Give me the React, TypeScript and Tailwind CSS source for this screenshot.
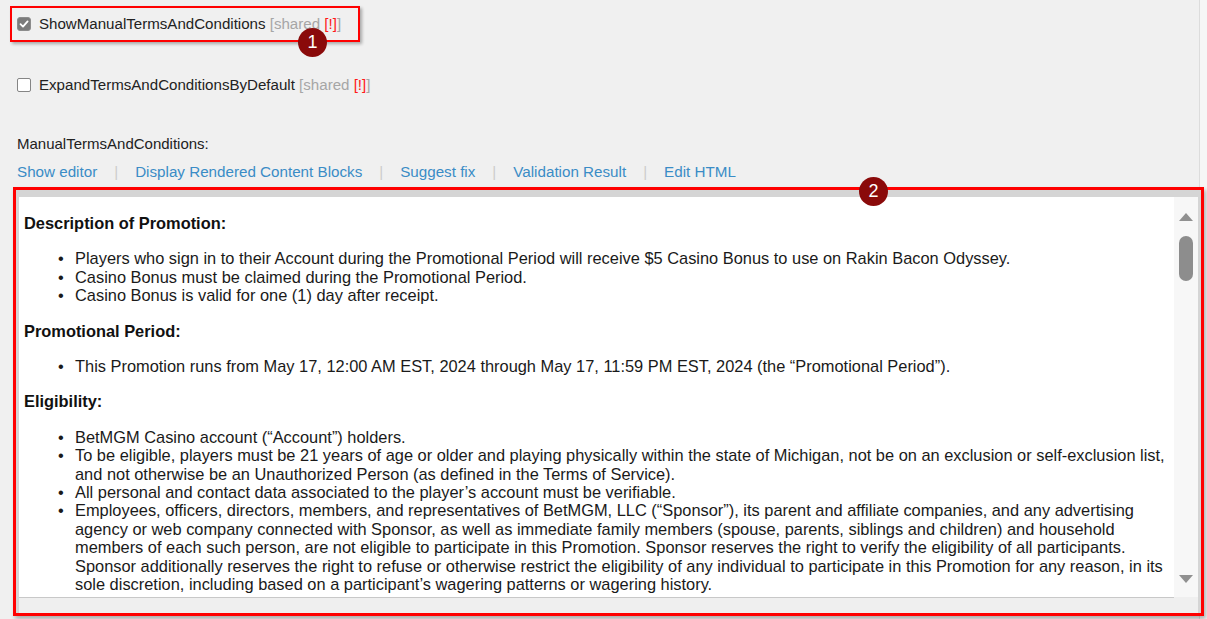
import React from "react";

function CheckedBox() {
  return (
    <span className="w-[14px] h-[14px] shrink-0 rounded-[3px] bg-[#7b7b7b] border border-[#8c8c8c] flex items-center justify-center">
      <svg width="10" height="10" viewBox="0 0 10 10">
        <path d="M1.5 5.2 L4 7.6 L8.6 2.4" fill="none" stroke="#ffffff" strokeWidth="1.8" strokeLinecap="round" strokeLinejoin="round" />
      </svg>
    </span>
  );
}

function EmptyBox() {
  return <span className="w-[14px] h-[14px] shrink-0 rounded-[2px] bg-white border border-[#858585]" />;
}

function Shared() {
  return (
    <span className="text-[#a6a6a6]">
      {" "}[shared <span className="text-[#ff1a1a]">[!]</span>]
    </span>
  );
}

function Badge({ n, className }: { n: string; className: string }) {
  return (
    <span
      className={
        "absolute w-[29px] h-[29px] rounded-full bg-[#8a0a0a] text-white text-[18px] leading-[29px] text-center " +
        className
      }
    >
      {n}
    </span>
  );
}

function Li({ children }: { children: React.ReactNode }) {
  return (
    <li className="flex">
      <span className="w-[17px] shrink-0">•</span>
      <span>{children}</span>
    </li>
  );
}

export default function App() {
  return (
    <div className="w-[1207px] h-[619px] overflow-hidden bg-[#f0f0f0] font-['Liberation_Sans',Arial,sans-serif] flex">
      <div className="w-[1199px] shrink-0 flex flex-col relative z-10">
        <div className="ml-[10px] mt-[6px] w-[350px] h-[36px] border-2 border-[#ff0000] shadow-[2px_2px_3px_rgba(0,0,0,0.3)] flex items-center pl-[5px] relative">
          <CheckedBox />
          <span className="ml-[8px] text-[15.1px] text-[#222222] whitespace-nowrap">
            ShowManualTermsAndConditions
            <Shared />
          </span>
          <Badge n="1" className="left-[286px] top-[20px]" />
        </div>

        <div className="mt-[33px] ml-[17px] h-[20px] flex items-center">
          <EmptyBox />
          <span className="ml-[8px] text-[15.1px] text-[#222222] whitespace-nowrap">
            ExpandTermsAndConditionsByDefault
            <Shared />
          </span>
        </div>

        <div className="mt-[40px] ml-[17px] h-[18px] leading-[18px] text-[15px] text-[#222222]">
          ManualTermsAndConditions:
        </div>

        <div className="mt-[10px] ml-[17px] h-[18px] leading-[18px] text-[15.2px] text-[#3a8cc6] flex whitespace-nowrap">
          <span>Show editor</span>
          <span className="mx-[17px] text-[#cccccc]">|</span>
          <span>Display Rendered Content Blocks</span>
          <span className="mx-[17px] text-[#cccccc]">|</span>
          <span>Suggest fix</span>
          <span className="mx-[17px] text-[#cccccc]">|</span>
          <span>Validation Result</span>
          <span className="mx-[17px] text-[#cccccc]">|</span>
          <span>Edit HTML</span>
        </div>

        <div className="mt-[6px] ml-[13px] w-[1191px] h-[429px] border-[3px] border-[#ff0000] shadow-[2px_3px_4px_rgba(0,0,0,0.28)] relative flex flex-col">
          <Badge n="2" className="left-[843px] top-[-13px] z-10" />
          <div className="flex-1 flex flex-col border-x-[3px] border-t-[7px] border-[#d5d5d5]">
            <div className="h-[400px] flex">
              <div className="w-[1155px] h-[400px] overflow-hidden bg-white pl-[5px] text-[16.4px] leading-[18.4px] text-[#1a1a1a]">
                <p className="my-[17px] font-bold text-[#111111]">Description of Promotion:</p>
                <ul className="my-[17px] pl-[34px]">
                  <Li>
                    Players who sign in to their Account during the Promotional Period will receive $5 Casino Bonus to use on Rakin Bacon Odyssey.
                  </Li>
                  <Li>Casino Bonus must be claimed during the Promotional Period.</Li>
                  <Li>Casino Bonus is valid for one (1) day after receipt.</Li>
                </ul>
                <p className="my-[17px] font-bold text-[#111111]">Promotional Period:</p>
                <ul className="my-[17px] pl-[34px]">
                  <Li>
                    This Promotion runs from May 17, 12:00 AM EST, 2024 through May 17, 11:59 PM EST, 2024 (the “Promotional Period”).
                  </Li>
                </ul>
                <p className="my-[17px] font-bold text-[#111111]">Eligibility:</p>
                <ul className="my-[17px] pl-[34px]">
                  <Li>BetMGM Casino account (“Account”) holders.</Li>
                  <Li>
                    To be eligible, players must be 21 years of age or older and playing physically within the state of Michigan, not be on an exclusion or self-exclusion list,
                    <br />
                    and not otherwise be an Unauthorized Person (as defined in the Terms of Service).
                  </Li>
                  <Li>All personal and contact data associated to the player’s account must be verifiable.</Li>
                  <Li>
                    Employees, officers, directors, members, and representatives of BetMGM, LLC (“Sponsor”), its parent and affiliate companies, and any advertising
                    <br />
                    agency or web company connected with Sponsor, as well as immediate family members (spouse, parents, siblings and children) and household
                    <br />
                    members of each such person, are not eligible to participate in this Promotion. Sponsor reserves the right to verify the eligibility of all participants.
                    <br />
                    Sponsor additionally reserves the right to refuse or otherwise restrict the eligibility of any individual to participate in this Promotion for any reason, in its
                    <br />
                    sole discretion, including based on a participant’s wagering patterns or wagering history.
                  </Li>
                  <Li>
                    An individual with a Sponsor account that has been suspended or closed in any jurisdiction is not eligible.
                  </Li>
                </ul>
              </div>
              <div className="w-[24px] h-[400px] bg-[#f7f7f7] flex flex-col items-center pt-[16px] pb-[14px]">
                <span className="w-0 h-0 border-x-[7px] border-x-transparent border-b-[8px] border-b-[#909090]" />
                <span className="mt-[15px] w-[14px] h-[45px] rounded-full bg-[#8d8d8d]" />
                <span className="mt-auto w-0 h-0 border-x-[7px] border-x-transparent border-t-[8px] border-t-[#909090]" />
              </div>
            </div>
            <div className="flex-1 flex">
              <div className="w-[1155px] bg-[#efefef] border-t border-[#c8c8c8]" />
              <div className="flex-1 bg-[#efefef]" />
            </div>
          </div>
        </div>
      </div>
      <div className="flex-1 bg-[#f6f6f6] border-l border-[#dcdcdc]" />
    </div>
  );
}
